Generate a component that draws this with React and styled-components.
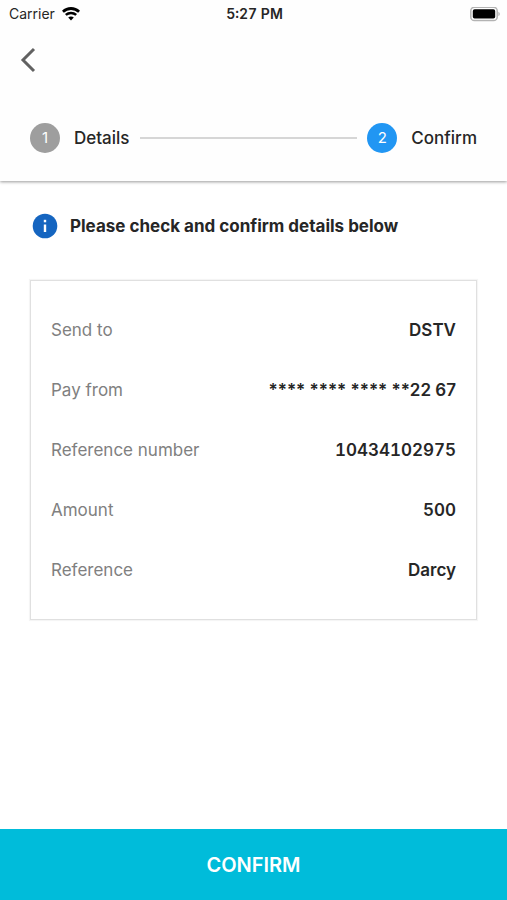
import React from 'react';
import styled, { createGlobalStyle } from 'styled-components';

const GlobalStyle = createGlobalStyle`
	* {
		box-sizing: border-box;
	}
	body {
		margin: 0;
		background-color: white;
		color: #262626;
		font-family: Inter, 'Liberation Sans', sans-serif;
		font-size: 17px;
		line-height: 20px;
	}
`;

const Screen = styled.div`
	display: flex;
	flex-direction: column;
	min-height: 100vh;
`;

const Header = styled.header`
	padding-bottom: 28px;
	background-color: #fefefe;
	box-shadow: 0 1px 3px rgba(0, 0, 0, 0.4);
`;

const StatusBar = styled.div`
	display: grid;
	grid-template-columns: 1fr auto 1fr;
	align-items: center;
	height: 28px;
	padding: 0 7px 0 9px;
	font-size: 14px;
`;

const Carrier = styled.div`
	display: flex;
	align-items: center;
	gap: 7px;
`;

const Time = styled.time`
	font-weight: 600;
	font-variant-numeric: tabular-nums;
`;

const Battery = styled.svg`
	justify-self: end;
`;

const BackButton = styled.button`
	display: flex;
	align-items: center;
	justify-content: center;
	width: 56px;
	height: 64px;
	padding: 0;
	border: none;
	background: none;
	color: #616161;
	cursor: pointer;
`;

const Steps = styled.ol`
	display: flex;
	align-items: center;
	margin: 0;
	padding: 31px 30px 0;
	list-style: none;
`;

const Step = styled.li`
	display: flex;
	align-items: center;
	gap: 14px;
	font-weight: 500;
`;

const StepNumber = styled.span`
	display: flex;
	align-items: center;
	justify-content: center;
	width: 30px;
	height: 30px;
	border-radius: 50%;
	background-color: ${props => (props.$active ? '#2196f3' : '#9e9e9e')};
	color: white;
	font-size: 15px;
	font-weight: 400;
`;

const StepLine = styled.li`
	flex: 1;
	height: 2px;
	margin: 0 10px;
	background-color: #d6d6d6;
`;

const Content = styled.main`
	flex: 1;
	padding: 32px 30px;
`;

const Notice = styled.h1`
	display: flex;
	align-items: center;
	gap: 12px;
	margin: 0 0 41px;
	padding-left: 2px;
	font-size: 17px;
	line-height: 26px;
	font-weight: 700;
`;

const Details = styled.dl`
	margin: 0;
	padding: 19px 20px;
	border: 1px solid #e0e0e0;
	box-shadow: 0 0 1px 1px rgba(0, 0, 0, 0.04);
`;

const DetailRow = styled.div`
	display: flex;
	align-items: center;
	justify-content: space-between;
	height: 60px;
`;

const Label = styled.dt`
	color: #808080;
`;

const Value = styled.dd`
	margin: 0;
	font-weight: 600;
	font-variant-numeric: ${props => (props.$masked ? 'normal' : 'tabular-nums')};
`;

const ConfirmButton = styled.button`
	height: 71px;
	padding: 0;
	border: none;
	background-color: #00bcda;
	color: white;
	font-family: inherit;
	font-size: 20px;
	font-weight: 600;
	text-transform: uppercase;
	cursor: pointer;
`;

const details = [
	{ label: 'Send to', value: 'DSTV' },
	{ label: 'Pay from', value: '**** **** **** **22 67', masked: true },
	{ label: 'Reference number', value: '10434102975' },
	{ label: 'Amount', value: '500' },
	{ label: 'Reference', value: 'Darcy' }
];

const WifiIcon = () => (
	<svg width="18" height="14" viewBox="0 0 18 14" fill="none" stroke="black" aria-hidden="true">
		<path d="M.9 4.7C5.5.4 12.5.4 17.1 4.7" strokeWidth="2.8" />
		<path d="M3.8 7.9c3-2.7 7.4-2.7 10.4 0" strokeWidth="2.5" />
		<path d="M9 13.4 6.2 10.6c1.6-1.5 4-1.5 5.6 0z" fill="black" stroke="none" />
	</svg>
);

const BatteryIcon = () => (
	<Battery width="30" height="15" viewBox="0 0 30 15" role="img" aria-label="Battery full">
		<rect x="0.8" y="0.3" width="26.4" height="13.2" rx="3.6" fill="white" stroke="#b3b3b3" strokeWidth="1.5" />
		<rect x="2.8" y="2.3" width="22.4" height="9.2" rx="1.8" fill="black" />
		<path d="M28.4 4.7c1.8.8 1.8 3.6 0 4.4z" fill="#b3b3b3" />
	</Battery>
);

const BackIcon = () => (
	<svg width="16" height="26" viewBox="0 0 16 26" fill="none" stroke="currentColor" aria-hidden="true">
		<path d="M14 2 3 13l11 11" strokeWidth="3" />
	</svg>
);

const InfoIcon = () => (
	<svg width="26" height="26" viewBox="0 0 26 26" aria-hidden="true">
		<circle cx="13" cy="13" r="12.3" fill="#1565c0" />
		<rect x="11.8" y="6.8" width="2.4" height="2.5" fill="white" />
		<rect x="11.8" y="11.5" width="2.4" height="7.5" fill="white" />
	</svg>
);

const App = () => (
	<>
		<GlobalStyle />
		<Screen>
			<Header>
				<StatusBar>
					<Carrier>
						Carrier
						<WifiIcon />
					</Carrier>
					<Time>5:27 PM</Time>
					<BatteryIcon />
				</StatusBar>
				<BackButton type="button" aria-label="Back">
					<BackIcon />
				</BackButton>
				<Steps>
					<Step>
						<StepNumber>1</StepNumber>
						Details
					</Step>
					<StepLine aria-hidden="true" />
					<Step aria-current="step">
						<StepNumber $active>2</StepNumber>
						Confirm
					</Step>
				</Steps>
			</Header>
			<Content>
				<Notice>
					<InfoIcon />
					Please check and confirm details below
				</Notice>
				<Details>
					{details.map(({ label, value, masked }) => (
						<DetailRow key={label}>
							<Label>{label}</Label>
							<Value $masked={masked}>{value}</Value>
						</DetailRow>
					))}
				</Details>
			</Content>
			<ConfirmButton type="button">Confirm</ConfirmButton>
		</Screen>
	</>
);

export default App;
